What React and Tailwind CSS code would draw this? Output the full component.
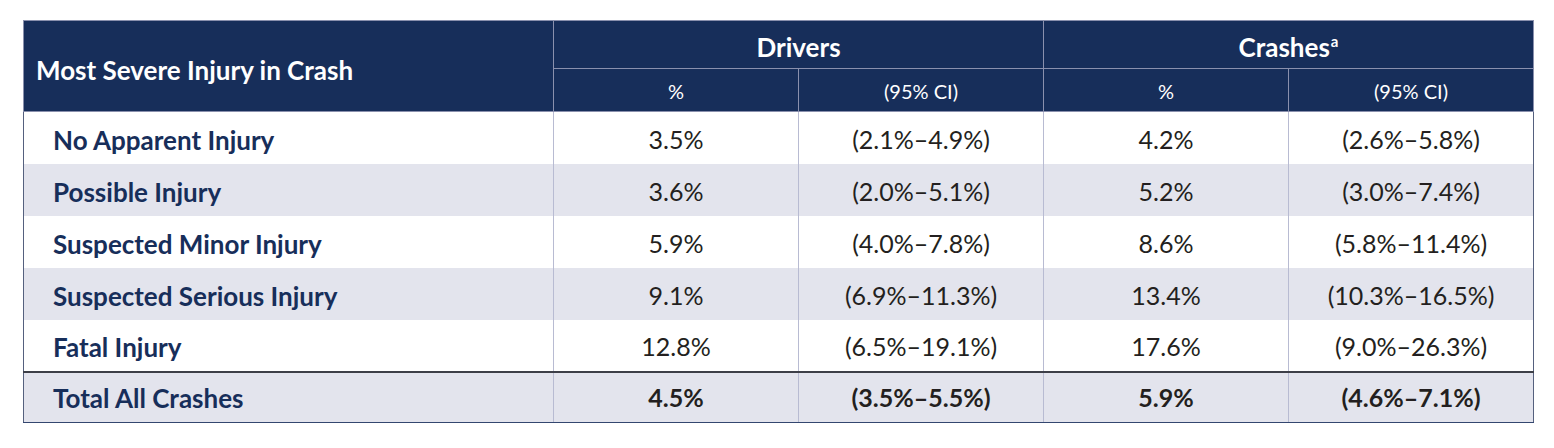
const rows = [
  ["No Apparent Injury", "3.5%", "(2.1%–4.9%)", "4.2%", "(2.6%–5.8%)"],
  ["Possible Injury", "3.6%", "(2.0%–5.1%)", "5.2%", "(3.0%–7.4%)"],
  ["Suspected Minor Injury", "5.9%", "(4.0%–7.8%)", "8.6%", "(5.8%–11.4%)"],
  ["Suspected Serious Injury", "9.1%", "(6.9%–11.3%)", "13.4%", "(10.3%–16.5%)"],
  ["Fatal Injury", "12.8%", "(6.5%–19.1%)", "17.6%", "(9.0%–26.3%)"],
];
const total = ["Total All Crashes", "4.5%", "(3.5%–5.5%)", "5.9%", "(4.6%–7.1%)"];

export default function App() {
  return (
    <div className="min-h-[448px] bg-white pl-[23px] pt-[20px] font-['Lato',_'Noto_Sans',_sans-serif]">
      <table className="w-[1510px] table-fixed border-collapse">
        <colgroup>
          <col className="w-[530px]" />
          <col className="w-[245px]" />
          <col className="w-[245px]" />
          <col className="w-[245px]" />
          <col className="w-[245px]" />
        </colgroup>
        <thead>
          <tr className="h-[48px] bg-[#172e5a] text-white">
            <th
              rowSpan={2}
              className="border border-[#8a90ad] pl-[12px] pt-[9px] text-left align-middle text-[26px] font-bold leading-tight"
            >
              Most Severe Injury in Crash
            </th>
            <th colSpan={2} className="border border-[#8a90ad] pt-[5px] text-center text-[26px] font-bold leading-tight">
              Drivers
            </th>
            <th colSpan={2} className="border border-[#8a90ad] pt-[5px] text-center text-[26px] font-bold leading-tight">
              Crashes
              <sup className="relative -top-[10px] ml-[1px] align-baseline text-[15px] font-bold leading-none">a</sup>
            </th>
          </tr>
          <tr className="h-[43px] bg-[#172e5a] text-white">
            <th className="border border-[#8a90ad] pt-[3px] text-center text-[20px] font-normal leading-tight">%</th>
            <th className="border border-[#8a90ad] pt-[3px] text-center text-[20px] font-normal leading-tight">(95% CI)</th>
            <th className="border border-[#8a90ad] pt-[3px] text-center text-[20px] font-normal leading-tight">%</th>
            <th className="border border-[#8a90ad] pt-[3px] text-center text-[20px] font-normal leading-tight">(95% CI)</th>
          </tr>
        </thead>
        <tbody>
          {rows.map((r, i) => (
            <tr key={r[0]} className={`h-[52px] ${i % 2 === 1 ? "bg-[#e3e4ed]" : "bg-white"}`}>
              <td className="border-l border-[#55607e] pl-[29px] pt-[5px] text-left text-[26px] font-bold leading-tight text-[#172e5a]">
                {r[0]}
              </td>
              {r.slice(1).map((v, j) => (
                <td
                  key={j}
                  className={`border-l border-[#b8bbd2] pt-[4px] text-center text-[25px] font-normal leading-tight text-[#231f20] ${
                    j === 3 ? "border-r border-r-[#55607e]" : ""
                  }`}
                >
                  {v}
                </td>
              ))}
            </tr>
          ))}
          <tr className="h-[51px] bg-[#e3e4ed]">
            <td className="border-t-2 border-b border-l border-t-[#3d3f48] border-b-[#33466f] border-l-[#55607e] pl-[29px] pt-[1px] text-left text-[26px] font-bold leading-tight text-[#172e5a]">
              {total[0]}
            </td>
            {total.slice(1).map((v, j) => (
              <td
                key={j}
                className={`border-t-2 border-b border-l border-t-[#3d3f48] border-b-[#33466f] border-l-[#b8bbd2] pt-[0px] text-center text-[25px] font-bold leading-tight text-[#231f20] ${
                  j === 3 ? "border-r border-r-[#55607e]" : ""
                }`}
              >
                {v}
              </td>
            ))}
          </tr>
        </tbody>
      </table>
    </div>
  );
}
